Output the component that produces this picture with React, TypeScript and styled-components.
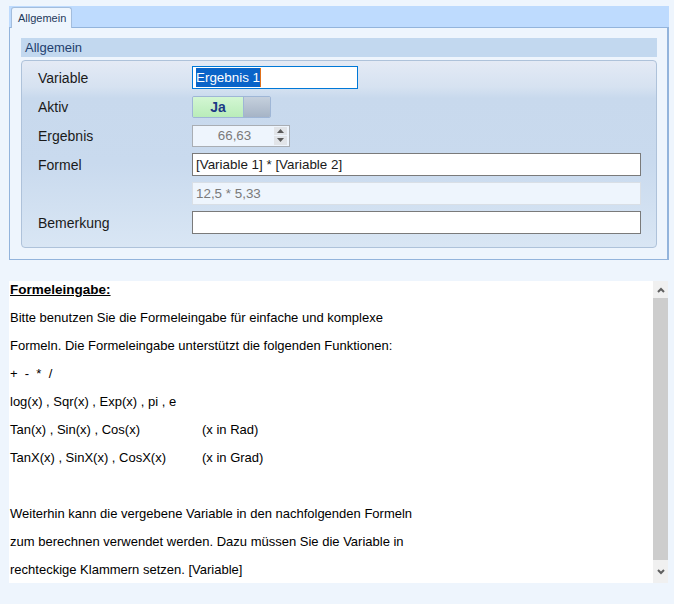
import React from "react";
import styled, { createGlobalStyle } from "styled-components";

const GlobalStyle = createGlobalStyle`
  html, body { margin: 0; padding: 0; background: #eef5fd; }
  body { font-family: "Liberation Sans", Arial, sans-serif; color: #1a1a1a; }
  * { box-sizing: border-box; }
`;

const Page = styled.div`
  width: 674px;
  height: 604px;
  padding: 6px 6px 0 9px;
  display: flex;
  flex-direction: column;
`;

const TabControl = styled.div`
  display: flex;
  flex-direction: column;
  width: 660px;
`;

const TabStrip = styled.div`
  height: 21px;
  background: #bedbfe;
  padding-left: 2px;
  display: flex;
  align-items: flex-end;
  position: relative;
  z-index: 1;
`;

const Tab = styled.div`
  width: 61px;
  height: 21px;
  margin-bottom: -1px;
  background: #eef5fd;
  border: 1px solid #a3bddd;
  border-bottom: none;
  border-radius: 3px 3px 0 0;
  font-size: 11px;
  color: #1e395b;
  padding: 4px 0 0 6px;
`;

const TabBody = styled.div`
  height: 233px;
  border: 1px solid #93b4dc;
  border-right-width: 2px;
  background: #eef5fd;
  padding: 10px 10px 11px 11px;
  display: flex;
  flex-direction: column;
  gap: 3px;
`;

const GroupHeader = styled.div`
  height: 19px;
  line-height: 19px;
  background: #c2d8ef;
  color: #1f3f6e;
  font-size: 13px;
  padding-left: 4px;
`;

const GroupPanel = styled.div`
  flex: 1;
  border: 1px solid #aec2da;
  border-radius: 4px;
  background: linear-gradient(
    to bottom,
    #e4eaf5 0%,
    #d6e2f1 14%,
    #c8d9ed 20%,
    #c9daee 55%,
    #d9e6f4 100%
  );
  padding: 5px 15px 0 16px;
  display: grid;
  grid-template-columns: 154px 1fr;
  grid-auto-rows: 23px;
  row-gap: 6px;
  align-items: center;
`;

const Label = styled.div`
  font-size: 14px;
  color: #1a1a1a;
`;

const Field = styled.div<{ $width?: number }>`
  width: ${(p) => (p.$width ? `${p.$width}px` : "100%")};
  height: 23px;
  display: flex;
  align-items: center;
`;

const TextBox = styled.div<{ $tone: "focus" | "normal" | "readonly" }>`
  width: 100%;
  height: 100%;
  border: 1px solid
    ${(p) =>
      p.$tone === "focus" ? "#0078d7" : p.$tone === "readonly" ? "#d9dfe6" : "#7a7a7a"};
  background: ${(p) => (p.$tone === "readonly" ? "#eef5fd" : "#ffffff")};
  color: ${(p) => (p.$tone === "readonly" ? "#7a7a7a" : "#1a1a1a")};
  font-size: 13.4px;
  padding: 0 3px;
  display: flex;
  align-items: center;
  white-space: pre;
`;

const Selected = styled.span`
  background: #0a64c8;
  color: #ffffff;
  line-height: 19px;
  border-right: 1px solid #e0701a;
`;

const Toggle = styled.div`
  width: 79px;
  height: 22px;
  display: flex;
  border: 1px solid #9fb6d6;
  border-radius: 2px;
  overflow: hidden;
`;

const ToggleOn = styled.div`
  width: 51px;
  background: linear-gradient(to bottom, #d3f6d3, #b9ecb9);
  color: #1c3a86;
  font-weight: bold;
  font-size: 14px;
  display: flex;
  align-items: center;
  justify-content: center;
  border-right: 1px solid #9fb6d6;
`;

const ToggleKnob = styled.div`
  flex: 1;
  background: linear-gradient(to bottom, #c5d0dd, #a6b4c6);
`;

const Spin = styled.div`
  width: 98px;
  height: 22px;
  border: 1px solid #a9aeb4;
  background: #eef5fd;
  display: flex;
  align-items: center;
  padding-right: 2px;
`;

const SpinValue = styled.div`
  flex: 1;
  text-align: center;
  font-size: 13.4px;
  color: #7a7a7a;
  padding-left: 2px;
`;

const SpinButtons = styled.div`
  width: 13px;
  height: 18px;
  display: flex;
  flex-direction: column;
  gap: 1px;
`;

const SpinButton = styled.div`
  flex: 1;
  background: #e1e4e8;
  display: flex;
  align-items: center;
  justify-content: center;
`;

const Help = styled.div`
  margin-top: 21px;
  width: 659px;
  height: 302px;
  display: flex;
  background: #ffffff;
`;

const HelpText = styled.div`
  flex: 1;
  padding-left: 1px;
  font-size: 13px;
  color: #000000;
`;

const Line = styled.div<{ $bold?: boolean }>`
  height: 18px;
  line-height: 18px;
  margin-bottom: 10px;
  white-space: pre;
  font-size: ${(p) => (p.$bold ? "13.5px" : "13px")};
  font-weight: ${(p) => (p.$bold ? "bold" : "normal")};
  text-decoration: ${(p) => (p.$bold ? "underline" : "none")};
`;

const Col = styled.span`
  display: inline-block;
  width: 192px;
`;

const ScrollBar = styled.div`
  width: 15px;
  background: #f0f0f0;
  display: flex;
  flex-direction: column;
`;

const ScrollButton = styled.div<{ $h: number }>`
  height: ${(p) => p.$h}px;
  display: flex;
  align-items: center;
  justify-content: center;
`;

const Thumb = styled.div`
  height: 262px;
  background: #cdcdcd;
`;

const Chevron = ({ up }: { up: boolean }) => (
  <svg width="8" height="6" viewBox="0 0 8 6">
    <polyline
      points={up ? "1,5 4,2 7,5" : "1,1 4,4 7,1"}
      fill="none"
      stroke="#606060"
      strokeWidth="2"
    />
  </svg>
);

const Tri = ({ up }: { up: boolean }) => (
  <svg width="7" height="4" viewBox="0 0 7 4">
    <polygon points={up ? "0,4 3.5,0 7,4" : "0,0 3.5,4 7,0"} fill="#5a5a5a" />
  </svg>
);

export default function App() {
  return (
    <>
      <GlobalStyle />
      <Page>
        <TabControl>
          <TabStrip>
            <Tab>Allgemein</Tab>
          </TabStrip>
          <TabBody>
            <GroupHeader>Allgemein</GroupHeader>
            <GroupPanel>
              <Label>Variable</Label>
              <Field $width={166}>
                <TextBox $tone="focus">
                  <Selected>Ergebnis 1</Selected>
                </TextBox>
              </Field>

              <Label>Aktiv</Label>
              <Field>
                <Toggle>
                  <ToggleOn>Ja</ToggleOn>
                  <ToggleKnob />
                </Toggle>
              </Field>

              <Label>Ergebnis</Label>
              <Field>
                <Spin>
                  <SpinValue>66,63</SpinValue>
                  <SpinButtons>
                    <SpinButton>
                      <Tri up />
                    </SpinButton>
                    <SpinButton>
                      <Tri up={false} />
                    </SpinButton>
                  </SpinButtons>
                </Spin>
              </Field>

              <Label>Formel</Label>
              <Field>
                <TextBox $tone="normal">[Variable 1] * [Variable 2]</TextBox>
              </Field>

              <Label />
              <Field>
                <TextBox $tone="readonly">12,5 * 5,33</TextBox>
              </Field>

              <Label>Bemerkung</Label>
              <Field>
                <TextBox $tone="normal" />
              </Field>
            </GroupPanel>
          </TabBody>
        </TabControl>

        <Help>
          <HelpText>
            <Line $bold>Formeleingabe:</Line>
            <Line>Bitte benutzen Sie die Formeleingabe für einfache und komplexe</Line>
            <Line>Formeln. Die Formeleingabe unterstützt die folgenden Funktionen:</Line>
            <Line>{"+  -  *  /"}</Line>
            <Line>log(x) , Sqr(x) , Exp(x) , pi , e</Line>
            <Line>
              <Col>Tan(x) , Sin(x) , Cos(x)</Col>(x in Rad)
            </Line>
            <Line>
              <Col>TanX(x) , SinX(x) , CosX(x)</Col>(x in Grad)
            </Line>
            <Line> </Line>
            <Line>Weiterhin kann die vergebene Variable in den nachfolgenden Formeln</Line>
            <Line>zum berechnen verwendet werden. Dazu müssen Sie die Variable in</Line>
            <Line>rechteckige Klammern setzen. [Variable]</Line>
          </HelpText>
          <ScrollBar>
            <ScrollButton $h={17}>
              <Chevron up />
            </ScrollButton>
            <Thumb />
            <ScrollButton $h={23}>
              <Chevron up={false} />
            </ScrollButton>
          </ScrollBar>
        </Help>
      </Page>
    </>
  );
}
